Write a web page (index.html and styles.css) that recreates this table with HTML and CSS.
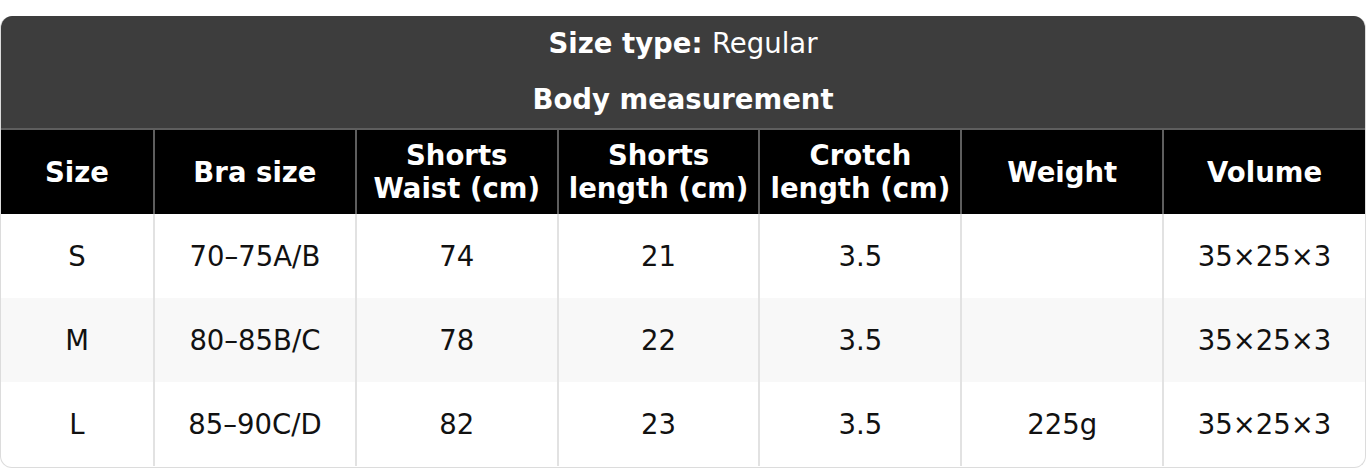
FILE: index.html
```html
<!DOCTYPE html>
<html>
<head>
<meta charset="utf-8">
<link rel="stylesheet" href="styles.css">
</head>
<body>
<div class="sheet">
  <table class="size-table">
    <colgroup>
      <col class="col-first">
      <col><col><col><col><col><col>
    </colgroup>
    <thead>
      <tr><th colspan="7" class="title"><b>Size type:</b> <span class="reg">Regular</span></th></tr>
      <tr><th colspan="7" class="title">Body measurement</th></tr>
      <tr class="head">
        <th>Size</th>
        <th>Bra size</th>
        <th>Shorts<br>Waist (cm)</th>
        <th>Shorts<br>length (cm)</th>
        <th>Crotch<br>length (cm)</th>
        <th>Weight</th>
        <th>Volume</th>
      </tr>
    </thead>
    <tbody>
      <tr>
        <td>S</td><td>70–75A/B</td><td>74</td><td>21</td><td>3.5</td><td></td><td>35×25×3</td>
      </tr>
      <tr class="alt">
        <td>M</td><td>80–85B/C</td><td>78</td><td>22</td><td>3.5</td><td></td><td>35×25×3</td>
      </tr>
      <tr>
        <td>L</td><td>85–90C/D</td><td>82</td><td>23</td><td>3.5</td><td>225g</td><td>35×25×3</td>
      </tr>
    </tbody>
  </table>
</div>
</body>
</html>
```
FILE: styles.css
```css
html, body {
  margin: 0;
  padding: 0;
  background: #fff;
}
body {
  font-family: "DejaVu Sans", sans-serif;
  font-size: 27.5px;
  padding-top: 16px;
}
.sheet {
  border-radius: 12px;
  overflow: hidden;
  border: 1px solid #dcdcdc;
  border-top: none;
  box-sizing: border-box;
  width: 1366px;
  height: 452px;
}
.size-table {
  width: 100%;
  border-collapse: collapse;
  table-layout: fixed;
}
.col-first {
  width: 153px;
}
.title {
  background: #3d3d3d;
  color: #fff;
  height: 56px;
  padding: 0;
  font-weight: bold;
  text-align: center;
  line-height: 1;
}
.title .reg {
  font-weight: normal;
}
.head th {
  background: #000;
  color: #fff;
  font-weight: bold;
  height: 84px;
  padding: 0;
  line-height: 33px;
  border-top: 2px solid #5e5e5e;
  border-left: 2px solid #5e5e5e;
  text-align: center;
}
.head th:first-child {
  border-left: none;
}
td {
  height: 84px;
  padding: 0;
  text-align: center;
  color: #111;
  border-left: 2px solid #e2e2e2;
}
td:first-child {
  border-left: none;
}
.alt td {
  background: #f8f8f8;
}
```
